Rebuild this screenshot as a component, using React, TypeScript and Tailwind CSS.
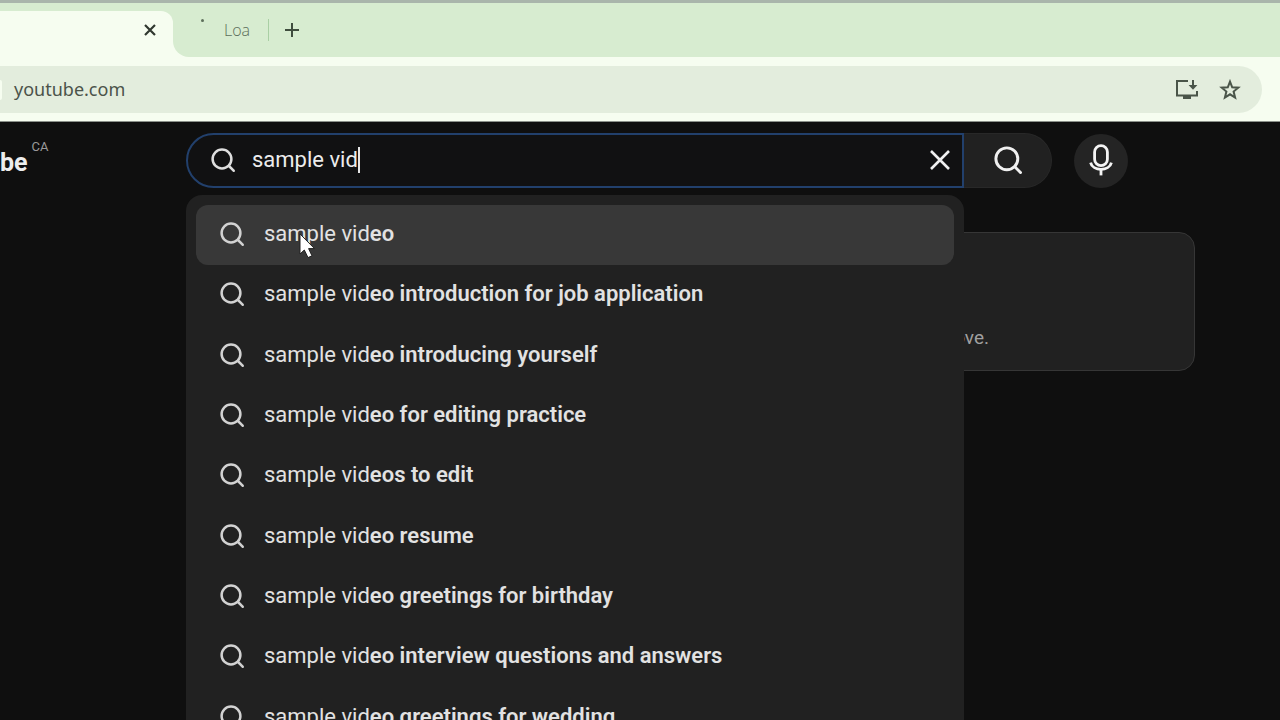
import { useState } from "react";

const suggestions = [
  { typed: "sample vid", rest: "eo" },
  { typed: "sample vid", rest: "eo introduction for job application" },
  { typed: "sample vid", rest: "eo introducing yourself" },
  { typed: "sample vid", rest: "eo for editing practice" },
  { typed: "sample vid", rest: "eos to edit" },
  { typed: "sample vid", rest: "eo resume" },
  { typed: "sample vid", rest: "eo greetings for birthday" },
  { typed: "sample vid", rest: "eo interview questions and answers" },
  { typed: "sample vid", rest: "eo greetings for wedding" },
];

function SearchIcon({ className }: { className: string }) {
  return (
    <svg viewBox="0 0 24 24" className={className} fill="none" stroke="currentColor" strokeWidth="2.5" aria-hidden="true">
      <circle cx="11" cy="11" r="9.4" />
      <path d="M17 17 L23.6 23.6" />
    </svg>
  );
}

function TabStrip() {
  return (
    <div className="flex h-[57px] border-t-[3px] border-[#a9b5ab] bg-[#f6fdf0]">
      <div className="flex w-[173px] flex-col bg-[#d7ecd0] pt-2">
        <div className="flex flex-1 items-center justify-end rounded-tr-xl bg-[#f6fdf0] pr-[17px] pb-2">
          <button aria-label="Close tab" className="text-[#30382f]">
            <svg viewBox="0 0 12 12" className="size-3" stroke="currentColor" strokeWidth="2.2" aria-hidden="true">
              <path d="M1 1 L11 11 M11 1 L1 11" />
            </svg>
          </button>
        </div>
      </div>
      <div className="flex flex-1 items-center rounded-bl-2xl bg-[#d7ecd0] pl-7">
        <span className="mb-5 size-[3px] rounded-full bg-[#5d6f5b]" />
        <span className="ml-5 w-[44px] font-['Open_Sans',sans-serif] text-[16px] leading-6 font-light text-[#5c6e5a]">Loa</span>
        <span className="h-[22px] w-px bg-[#a9cfa4]" />
        <button aria-label="New tab" className="ml-4 text-[#3f4d3e]">
          <svg viewBox="0 0 14 14" className="size-3.5" stroke="currentColor" strokeWidth="2" aria-hidden="true">
            <path d="M7 0 V14 M0 7 H14" />
          </svg>
        </button>
      </div>
    </div>
  );
}

function Toolbar() {
  return (
    <div className="flex h-[65px] border-b border-[#8b918a] bg-[#f6fdf0] pt-[9px] pr-[18px] pb-2">
      <div className="flex flex-1 items-center rounded-r-full bg-[#e3eddd]">
        <span className="h-5 w-0.5 rounded-r bg-[#f6fdf0]" />
        <span className="ml-3 flex-1 pb-0.5 font-['Noto_Sans',sans-serif] text-lg leading-6 text-[#4b534a]">youtube.com</span>
        <button aria-label="Install app" className="text-[#4a5549]">
          <svg viewBox="0 0 24 22" className="h-[22px] w-6" fill="none" stroke="currentColor" strokeWidth="2" aria-hidden="true">
            <path d="M13 2 H2 V16.5 H22 V12" />
            <path d="M18 1 V8" />
            <path d="M13.6 6 H22.4 L18 10.8 Z" fill="currentColor" stroke="none" />
            <path d="M8 16 H16 V20 H8 Z" fill="currentColor" stroke="none" />
          </svg>
        </button>
        <button aria-label="Bookmark this page" className="mr-[21px] ml-5 text-[#4a5549]">
          <svg viewBox="0 0 22 22" className="size-[22px]" fill="none" stroke="currentColor" strokeWidth="2" aria-hidden="true">
            <path d="M11 2.6 L13.2 8.3 L19.3 8.7 L14.6 12.6 L16.1 18.6 L11 15.3 L5.9 18.6 L7.4 12.6 L2.7 8.7 L8.8 8.3 Z" />
          </svg>
        </button>
      </div>
    </div>
  );
}

function SuggestionList() {
  return (
    <ul className="absolute inset-x-0 top-[62px] z-10 grid h-[563px] grid-rows-9 rounded-2xl bg-[#212121] p-2.5">
      {suggestions.map((s, i) => (
        <li key={s.rest} className="flex">
          <button
            className={
              i === 0
                ? "flex flex-1 items-center gap-5 rounded-xl bg-[#383838] pb-0.5 pl-6 text-left"
                : "flex flex-1 items-center gap-5 rounded-xl pb-0.5 pl-6 text-left"
            }
          >
            <SearchIcon className="size-6 text-[#d2d2d2]" />
            <span className="text-[22px] leading-7 whitespace-pre text-[#e2e2e2]">
              {s.typed}
              <b className="font-semibold">{s.rest}</b>
            </span>
          </button>
        </li>
      ))}
    </ul>
  );
}

function Cursor() {
  return (
    <svg viewBox="0 0 16 26" className="pointer-events-none absolute top-[100px] left-[113px] z-20 h-[26px] w-4" aria-hidden="true">
      <path d="M1 1 V21 L5.3 17 L9 24.6 L13 22.8 L9.6 15.6 H15.5 Z" fill="#fff" stroke="#222" strokeWidth="1" />
    </svg>
  );
}

export default function App() {
  const [query, setQuery] = useState("sample vid");
  return (
    <div className="h-screen overflow-hidden bg-[#0f0f0f] font-[Roboto,sans-serif]">
      <TabStrip />
      <Toolbar />
      <header className="flex items-center pt-[11px] pr-[152px]">
        <a href="#" className="flex w-[186px] items-start pb-1 text-[#ededed]">
          <span className="pt-2 text-[25px] leading-7 font-bold">be</span>
          <span className="ml-1 text-[13px] leading-3 text-[#9a9a9a]">CA</span>
        </a>
        <form className="relative flex h-[55px] flex-1" onSubmit={(e) => e.preventDefault()}>
          <div className="flex flex-1 items-center rounded-l-full border-2 border-[#22406c] bg-[#111112] pr-3 pb-0.5 pl-[23px]">
            <SearchIcon className="size-6 text-[#dedede]" />
            <input
              aria-label="Search"
              value={query}
              onChange={(e) => setQuery(e.target.value)}
              className="ml-[17px] field-sizing-content text-[22px] leading-7 text-[#ececec] caret-transparent outline-none"
            />
            <span className="h-[26px] w-0.5 bg-[#e6e6e6]" />
            <button type="button" aria-label="Clear" onClick={() => setQuery("")} className="ml-auto text-[#f0f0f0]">
              <svg viewBox="0 0 20 20" className="size-5" stroke="currentColor" strokeWidth="2.6" aria-hidden="true">
                <path d="M1 1 L19 19 M19 1 L1 19" />
              </svg>
            </button>
          </div>
          <SuggestionList />
          <Cursor />
        </form>
        <button aria-label="Submit search" className="flex h-[55px] w-[88px] items-center justify-center rounded-r-full border border-l-0 border-[#282828] bg-[#212121] pb-0.5 text-[#f0f0f0]">
          <SearchIcon className="size-7" />
        </button>
        <button aria-label="Search with your voice" className="ml-[22px] flex size-[54px] items-center justify-center rounded-full bg-[#242424] pb-0.5 text-[#f4f4f4]">
          <svg viewBox="0 0 24 32" className="h-8 w-6" fill="none" stroke="currentColor" strokeWidth="2.8" aria-hidden="true">
            <rect x="5.6" y="1.6" width="12.8" height="20" rx="6.4" />
            <path d="M1.6 18.6 C3.6 27.6 20.4 27.6 22.4 18.6" />
            <path d="M12 25.5 V31.4" />
          </svg>
        </button>
      </header>
      <main className="pt-11 pr-[85px] pl-[372px]">
        <section className="flex h-[139px] items-end justify-end rounded-2xl border border-[#363636] bg-[#212121] pr-[205px] pb-5">
          <p className="text-[19px] leading-6 text-[#a0a0a0]">love.</p>
        </section>
      </main>
    </div>
  );
}
